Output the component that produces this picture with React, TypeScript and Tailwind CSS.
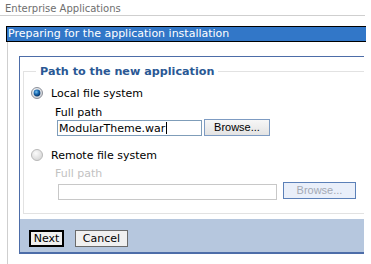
function Radio({ checked }: { checked?: boolean }) {
  return (
    <svg width="12" height="12" viewBox="0 0 12 12" className="shrink-0">
      <defs>
        <radialGradient id="rOuterOn" cx="0.4" cy="0.35" r="0.7">
          <stop offset="0" stopColor="#ffffff" />
          <stop offset="1" stopColor="#c9ccd2" />
        </radialGradient>
        <radialGradient id="rDot" cx="0.4" cy="0.35" r="0.65">
          <stop offset="0" stopColor="#7cc3ee" />
          <stop offset="0.5" stopColor="#1a6bb3" />
          <stop offset="1" stopColor="#083566" />
        </radialGradient>
        <radialGradient id="rOff" cx="0.4" cy="0.35" r="0.7">
          <stop offset="0" stopColor="#fbfbfb" />
          <stop offset="1" stopColor="#d4d4d4" />
        </radialGradient>
      </defs>
      {checked ? (
        <>
          <circle cx="6" cy="6" r="5.5" fill="url(#rOuterOn)" stroke="#8c9099" strokeWidth="1" />
          <circle cx="6" cy="6" r="3.4" fill="url(#rDot)" />
        </>
      ) : (
        <circle cx="6" cy="6" r="5.5" fill="url(#rOff)" stroke="#b9b9b9" strokeWidth="1" />
      )}
    </svg>
  );
}

export default function App() {
  return (
    <div className="w-[371px] h-[264px] overflow-hidden bg-white font-['DejaVu_Sans',Verdana,sans-serif] text-[11px] text-black">
      <div className="w-[365px] h-[16px] border-b border-[#cfcfcf] pl-[5px] pt-[3px] text-[10px] leading-[12px] text-[#6e6e6e]">
        Enterprise Applications
      </div>

      <div className="mt-[10px] ml-[6px] w-[360px] h-[16px] border-y border-l border-black bg-[#3277c8] pl-[1px] leading-[14px] text-white">
        Preparing for the application installation
      </div>

      <div className="ml-[7px] h-[222px] border-l border-[#cfcfcf] pl-[11px] pt-[14px]">
        <div className="w-[345px] border-l border-t border-b-2 border-[#4d6da8]">
          <div className="pl-[3px] pt-[7px]">
            <fieldset className="border border-r-0 border-[#e2e2e2] pl-[7px] pb-[13px]">
              <legend className="ml-[5px] px-[4px] text-[11.2px] leading-[15px] font-bold text-[#2a5894]">
                Path to the new application
              </legend>

              <div className="mt-[8px] flex h-[13px] items-center gap-[8px] leading-[13px]">
                <div className="-mt-[2px]">
                  <Radio checked />
                </div>
                <span>Local file system</span>
              </div>
              <div className="mt-[7px] ml-[24px] leading-[12px]">Full path</div>
              <div className="ml-[26px] flex items-start gap-[2px]">
                <div className="mt-[1px] flex h-[16px] w-[145px] items-center border border-[#7f9db9] pl-[1px] leading-[13px]">
                  <span>ModularTheme.war</span>
                  <span className="ml-[1px] inline-block h-[12px] w-px bg-black" />
                </div>
                <div className="flex h-[17px] w-[66px] items-center justify-center border border-[#7d9bc2] bg-gradient-to-b from-[#f7f7f7] to-[#e3e3e3] font-['Liberation_Sans',Arial,sans-serif] text-[11px] leading-[13px]">
                  Browse...
                </div>
              </div>

              <div className="mt-[13px] flex h-[13px] items-center gap-[8px] leading-[13px]">
                <div className="-mt-[2px]">
                  <Radio />
                </div>
                <span>Remote file system</span>
              </div>
              <div className="mt-[6px] ml-[24px] leading-[12px] text-[#c2c2c2]">Full path</div>
              <div className="mt-[2px] ml-[27px] flex items-start gap-[6px]">
                <div className="mt-[2px] h-[16px] w-[219px] border border-[#c8c8c8] bg-white" />
                <div className="flex h-[17px] w-[73px] items-center justify-center border border-[#5b80b8] bg-[#e9effa] font-['Liberation_Sans',Arial,sans-serif] text-[11px] leading-[13px] text-[#a3a9b4]">
                  Browse...
                </div>
              </div>
            </fieldset>
          </div>

          <div className="mt-[5px] flex h-[33px] gap-[11px] bg-[#b6c7de] pl-[9px] pt-[11px]">
            <div className="flex h-[17px] w-[35px] items-center justify-center border-2 border-black bg-[#f0f0f0] leading-[13px]">
              Next
            </div>
            <div className="flex h-[17px] w-[53px] items-center justify-center border border-[#6b6b6b] bg-[#f0f0f0] leading-[13px]">
              Cancel
            </div>
          </div>
        </div>
      </div>
    </div>
  );
}
